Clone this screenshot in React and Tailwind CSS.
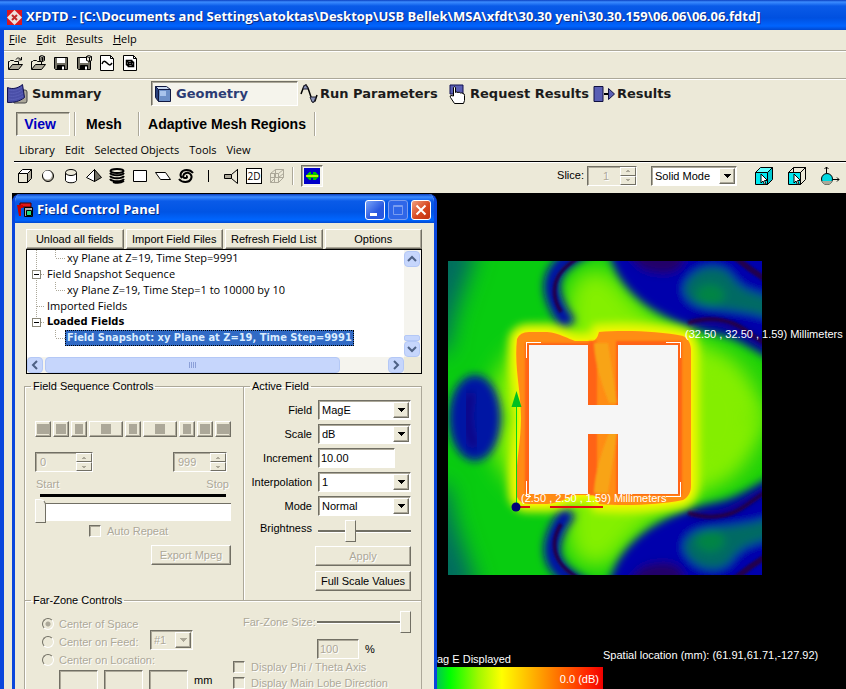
import React from 'react'
import clsx from 'clsx'

const raised = 'border border-t-white border-l-white border-r-[#716f64] border-b-[#716f64] shadow-[inset_-1px_-1px_0_#aca899]'
const sunken = 'border border-t-[#716f64] border-l-[#716f64] border-r-white border-b-white shadow-[inset_1px_1px_0_#aca899]'
const ghost = 'text-[#aca899] [text-shadow:1px_1px_0_#fff]'

/* ---------- small controls ---------- */

const Button = ({ children, className, disabled }) => (
  <button disabled={disabled} className={clsx('h-5 bg-[#ece9d8] text-center leading-4 whitespace-nowrap', raised, disabled && ghost, className)}>
    {children}
  </button>
)

const Select = ({ id, value, disabled, className, label }) => (
  <div className={clsx('flex h-5 items-stretch p-px', sunken, disabled ? 'bg-[#ece9d8]' : 'bg-white', className)}>
    <select id={id} aria-label={label} disabled={disabled} defaultValue={value} className={clsx('min-w-0 flex-1 appearance-none bg-transparent pl-0.5 leading-4 opacity-100', disabled && ghost)}>
      <option>{value}</option>
    </select>
    <span className={clsx('flex w-4 items-center justify-center bg-[#ece9d8]', raised)}>
      <svg width="7" height="4" viewBox="0 0 7 4" shapeRendering="crispEdges">
        <path d="M0 0h7v1h-1v1h-1v1h-1v1h-1v-1h-1v-1h-1v-1h-1z" fill={disabled ? '#aca899' : '#000'} />
      </svg>
    </span>
  </div>
)

const Spinner = ({ value, label, className, inputClass }) => (
  <div className={clsx('flex h-5 items-stretch bg-[#ece9d8]', sunken, className)}>
    <input aria-label={label} disabled defaultValue={value} className={clsx('min-w-0 flex-1 bg-transparent pl-1 leading-4', ghost, inputClass)} />
    <div className="flex w-4 flex-col">
      {['M0 2h4v-1h-1v-1h-2v1h-1z', 'M0 0h4v1h-1v1h-2v-1h-1z'].map((d, i) => (
        <button key={d} disabled aria-label={i ? 'Decrease' : 'Increase'} className="flex flex-1 items-center justify-center border border-t-white border-l-white border-r-[#716f64] border-b-[#716f64]">
          <svg width="4" height="2" viewBox="0 0 4 2"><path d={d} fill="#aca899" /></svg>
        </button>
      ))}
    </div>
  </div>
)

const Check = ({ id, children }) => (
  <div className="flex h-4 items-center gap-1.5">
    <input id={id} type="checkbox" disabled className={clsx('size-3 shrink-0 appearance-none bg-[#ece9d8]', sunken)} />
    <label htmlFor={id} className={clsx('whitespace-nowrap', ghost)}>{children}</label>
  </div>
)

const Radio = ({ id, checked, children }) => (
  <div className="flex h-[18px] items-center gap-[5px]">
    <input
      id={id}
      type="radio"
      name="center"
      disabled
      defaultChecked={checked}
      className="size-3 shrink-0 appearance-none rounded-full border border-t-[#716f64] border-l-[#716f64] border-r-white border-b-white checked:bg-[radial-gradient(circle,#aca899_2px,transparent_3px)]"
    />
    <label htmlFor={id} className={clsx('whitespace-nowrap', ghost)}>{children}</label>
  </div>
)

const Range = ({ id, value, disabled, className }) => (
  <input
    id={id}
    type="range"
    disabled={disabled}
    defaultValue={value}
    className={clsx(
      'h-[22px] appearance-none bg-[linear-gradient(to_bottom,transparent_10px,#716f64_10px,#716f64_12px,white_12px,white_13px,transparent_13px)]',
      '[&::-webkit-slider-thumb]:h-[22px] [&::-webkit-slider-thumb]:w-[11px] [&::-webkit-slider-thumb]:appearance-none [&::-webkit-slider-thumb]:border [&::-webkit-slider-thumb]:border-t-white [&::-webkit-slider-thumb]:border-l-white [&::-webkit-slider-thumb]:border-r-[#716f64] [&::-webkit-slider-thumb]:border-b-[#716f64] [&::-webkit-slider-thumb]:bg-[#ece9d8]',
      className
    )}
  />
)

/* ---------- icons ---------- */

const Icon = ({ w = 16, h = 16, children, className }) => (
  <svg width={w} height={h} viewBox={`0 0 ${w} ${h}`} fill="none" stroke="#000" className={clsx('shrink-0', className)}>
    {children}
  </svg>
)

const OpenIcon = ({ badge }) => (
  <Icon>
    <path d="M1.500 14V6.500h1l1-1h3l1 1h4v3" fill="#ece9d8" />
    <path d="M1.500 14.500l4-5h10l-4 5z" fill="#aca899" />
    {badge ? (
      <path d="M9.500 1.500l2-1 3 1v4l-2 1-3-1zM9.500 1.500l3 1v4M12.500 2.500l2-1M9.500 4h5" />
    ) : (
      <path d="M9 4.500c1-2 3-2 5 0M14.500 2v3h-3" />
    )}
  </Icon>
)

const SaveIcon = ({ badge }) => (
  <Icon>
    <path d="M1.500 2.500h13v12h-12l-1-1z" fill="#716f64" />
    <path d="M4 3h8v5h-8z" fill="#fff" stroke="none" />
    <path d="M4.500 10.500h7v4h-7z" fill="#000" />
    <path d="M9 11.500h2v3h-2z" fill="#fff" stroke="none" />
    {badge && <path d="M10.500 1.500l2-1 3 1v4l-2 1-3-1zM10.500 1.500l3 1v4M13.500 2.500l2-1" fill="#ece9d8" />}
  </Icon>
)

const PageIcon = ({ cube }) => (
  <Icon>
    <path d="M1.500.5h10l3 3v12h-13z" fill="#fff" />
    <path d="M11.500.5v3h3" />
    {cube ? (
      <path d="M4.500 5.500h5v4h-5zM6.500 7.500h5v4h-5zM4.500 5.500l2 2M9.500 5.500l2 2M4.500 9.500l2 2M9.500 9.500l2 2" strokeWidth="1.500" />
    ) : (
      <path d="M3 9c1.500-4 3-3 5-1s3 3 5 0" strokeWidth="1.500" />
    )}
  </Icon>
)

const shapes = [
  <Icon key="box"><path d="M1.500 5.500h9v9h-9z" fill="#ece9d8" /><path d="M1.500 5.500l4-4h9l-4 4z" fill="#fff" /><path d="M14.500 1.500v9l-4 4v-9z" fill="#aca899" /></Icon>,
  <Icon key="sphere"><circle cx="8" cy="8" r="5.500" fill="#aca899" /><circle cx="7.500" cy="7" r="4.500" fill="#fff" stroke="none" /></Icon>,
  <Icon key="cylinder"><path d="M2.500 4.500v8c1 3 10 3 11 0v-8" fill="#fff" /><ellipse cx="8" cy="4.500" rx="5.500" ry="3" fill="#ece9d8" /></Icon>,
  <Icon key="pyramid"><path d="M8.500 1.500l-8 8 8 4z" fill="#fff" /><path d="M8.500 1.500l7 8-7 4z" fill="#716f64" /></Icon>,
  <Icon key="coil"><g strokeWidth="2"><ellipse cx="8" cy="3" rx="6.500" ry="2" /><path d="M1 5c2 3 12 3 14 0M1 8c2 3 12 3 14 0M1 11c2 3 12 3 14 0M4 14c3 1 8 1 11-1" /></g></Icon>,
  <Icon key="rect"><path d="M1.500 2.500h13v11h-13z" fill="#fff" /></Icon>,
  <Icon key="skew"><path d="M.5 4.500h10l5 7h-10z" fill="#fff" /></Icon>,
  <Icon key="spiral"><path d="M1 11c3 4 10 4 12 0s-2-7-5-6-4 5-1 5 2-2 1-2M15 5c-3-4-10-4-12 0-1 2 0 4 1 5" strokeWidth="2" /></Icon>,
]

const HornIcon = () => (
  <Icon><path d="M1.500 6.500h7v4h-7z" fill="#aca899" /><path d="M8.500 6.500l6-5v14l-6-5M14.500 1v14" /></Icon>
)

const MeshIcon = () => (
  <Icon>
    <path d="M1.500 5.500l5-4h8v8l-5 5h-8zM1.500 5.500h8v9M9.500 5.500l5-4M5.500 5.500v9M1.500 9.500h8l5-4M6.500 1.500v8l-5 5M6.500 9.500h8" stroke="#aca899" />
  </Icon>
)

const FieldIcon = () => (
  <svg width="16" height="16" viewBox="0 0 16 16" shapeRendering="crispEdges">
    <path d="M0 0h16v16H0z" fill="#0000c8" />
    <path d="M1 8l4-4h2v2h2V4h2l4 4-4 4H9v-2H7v2H5z" fill="#00c000" />
    <path d="M2 7h12v2H2z" fill="#c0f000" />
  </svg>
)

const SelectCube = ({ solid }) => (
  <Icon w={20} h={20}>
    <path d="M1.500 6.500h12v12h-12z" fill="#00e8f0" />
    <path d="M1.500 6.500l5-5h12l-5 5z" fill={solid ? '#60ffff' : 'none'} />
    <path d="M18.500 1.500v12l-5 5v-12z" fill={solid ? '#00c8d0' : 'none'} />
    {!solid && <path d="M6.500 1.500v5" />}
    <path d="M7 8v9l2-2 1.500 3.500 1.500-.5-1.500-3.500h3z" fill="#fff" />
  </Icon>
)

const AxisBall = () => (
  <Icon w={20} h={20}>
    <circle cx="7" cy="13" r="5.500" fill="#00d8e0" />
    <path d="M2 15c1 5 9 5 10 0z" fill="#aca899" stroke="none" />
    <path d="M6.500 7V1M4.500 3l2-2 2 2M13 13.500h6M17 11.500l2 2-2 2" />
  </Icon>
)

const SummaryIcon = () => (
  <Icon w={22} h={20}>
    <path d="M8 6h11q2 0 2 2v9q0 2-2 2h-11z" fill="#aca899" stroke="#444" />
    <path d="M1.500 3.500c5 2 10 1 15-3l2 13c-5 4-10 5-17 5z" fill="#4a4fa8" stroke="#101050" />
    <path d="M3 6c5 1 9 0 13-3M3 9c5 1 9 0 13-3M3 12c5 1 9 0 14-3M3 15c5 1 9 0 14-3" stroke="#5a60b8" />
  </Icon>
)

const GeometryIcon = () => (
  <Icon w={18} h={18}>
    <path d="M1.500 1.500l3 3v12l-3-4z" fill="#28407c" stroke="#101840" />
    <path d="M1.500 1.500h11l4 3h-12z" fill="#c8d8f0" stroke="#101840" />
    <path d="M4.500 4.500h12v12h-12z" fill="#6c90c8" stroke="#101840" />
    <path d="M6 6h6v5h-6z" fill="#a8c4ec" stroke="none" />
  </Icon>
)

const WaveIcon = () => (
  <Icon w={18} h={20}>
    <path d="M1 10l3-8 2-1 2 3 4 12 1 2 2-1 2-6" strokeWidth="1.500" />
    <path d="M3 5l1-3 2-1 2 4zM10 13h6l-2 5h-2z" fill="#8a94b8" stroke="#223" />
  </Icon>
)

const HandIcon = () => (
  <Icon w={18} h={20}>
    <path d="M2 1h13v9h-13z" fill="#5a5fb4" stroke="#101050" />
    <path d="M5.500 12V3.500q1-1.500 2 0v5q1-1 2.500 0 1-1 2.500.5 1.500-.5 2.500.5v0q1.500 0 1.500 2v5l-1 3h-9l-4-6q-1-2 .5-2z" fill="#fff" />
  </Icon>
)

const ResultsIcon = () => (
  <Icon w={22} h={18}>
    <path d="M1 1.500h9v15h-9z" fill="#5a5fb4" stroke="#101040" />
    <path d="M11 9h5" strokeWidth="2" />
    <path d="M15.500 3.500l6 5.500-6 5.500z" fill="#5a5fb4" stroke="#101040" />
  </Icon>
)

const Separator = () => <span className="w-0.5 border-l border-l-[#aca899] border-r border-r-white" />

/* ---------- application bars ---------- */

const TitleBar = () => (
  <header className="flex h-[30px] shrink-0 items-center gap-1 bg-[linear-gradient(to_bottom,#0a3fc0_0px,#3c8cff_2px,#0a5be8_6px,#0050e0_18px,#0064ff_26px,#0048d0_30px)] pt-1 pl-[7px]">
    <svg width="15" height="15" viewBox="0 0 15 15">
      <path d="M0 0h15v15H0z" fill="#d81820" />
      <path d="M7.500 0l7.500 7.500-7.500 7.500L0 7.500z" fill="#f0e0dc" />
      <path d="M5 5l5 5M10 5l-5 5" stroke="#c02828" strokeWidth="2" />
    </svg>
    <h1 className="font-['Open_Sans',sans-serif] text-[13px] font-bold whitespace-nowrap text-white [text-shadow:1px_1px_0_#0a2a80]">
      {'XFDTD - [C:\\Documents and Settings\\atoktas\\Desktop\\USB Bellek\\MSA\\xfdt\\30.30 yeni\\30.30.159\\06.06\\06.06.fdtd]'}
    </h1>
  </header>
)

const MainMenu = () => (
  <nav className="flex h-[21px] items-center gap-2.5 border-b border-[#aca899] pb-0.5 pl-[5px]">
    {['File', 'Edit', 'Results', 'Help'].map((name) => (
      <button key={name}><u>{name[0]}</u>{name.slice(1)}</button>
    ))}
  </nav>
)

const fileTools = [
  ['Open', <OpenIcon />],
  ['Open geometry', <OpenIcon badge />],
  ['Save', <SaveIcon />],
  ['Save geometry', <SaveIcon badge />],
  ['Run file', <PageIcon />],
  ['Geometry file', <PageIcon cube />],
]

const FileTools = () => (
  <div className="flex h-7 items-center gap-[7px] border-t border-b border-t-white border-b-[#aca899] pb-1 pl-[3px]">
    {fileTools.map(([name, icon]) => <button key={name} aria-label={name}>{icon}</button>)}
  </div>
)

const MainTabs = () => (
  <nav className="flex h-7 items-center border-t border-white pl-0.5 font-['DejaVu_Sans',sans-serif] text-[13px] font-bold text-[#1c1c1c]">
    <button className="flex w-[145px] items-center gap-1"><SummaryIcon />Summary</button>
    <button className={clsx('flex h-[25px] w-[147px] items-center gap-1 bg-[#f5f4ec] pl-0.5 text-[#2c3c74]', sunken)}><GeometryIcon />Geometry</button>
    <button className="flex w-[150px] items-center gap-0.5 pl-0.5 whitespace-nowrap"><WaveIcon />Run Parameters</button>
    <button className="flex w-[145px] items-center gap-1 whitespace-nowrap"><HandIcon />Request Results</button>
    <button className="flex items-center gap-0.5"><ResultsIcon />Results</button>
  </nav>
)

const ViewTabs = () => (
  <nav className="flex h-[33px] items-center gap-1 pl-3 font-['Liberation_Sans',sans-serif] text-sm font-bold text-black">
    <button className={clsx('h-6 w-[54px] pr-1.5 leading-5 text-[#0000c0]', sunken)}>View</button>
    <span className="flex h-6"><Separator /></span>
    <button className="w-[54px] pr-1.5">Mesh</button>
    <span className="flex h-6"><Separator /></span>
    <button className="w-[166px] whitespace-nowrap">Adaptive Mesh Regions</button>
    <span className="flex h-6"><Separator /></span>
  </nav>
)

const GeometryMenu = () => (
  <nav className="flex h-[22px] items-center gap-2.5 border-b border-black pl-[5px]">
    {['Library', 'Edit', 'Selected Objects', 'Tools', 'View'].map((name) => <button key={name}>{name}</button>)}
  </nav>
)

const GeometryTools = () => (
  <div className="flex h-[31px] items-center border-t border-white pb-[5px] pl-[3px]">
    <div className="flex items-center gap-[7px]">
      {shapes.map((icon) => <button key={icon.key} aria-label={icon.key}>{icon}</button>)}
      <span className="mx-[7px] h-3 w-px bg-black" />
      <button aria-label="horn"><HornIcon /></button>
      <button className="size-4 border border-black bg-white text-[10px] leading-3">2D</button>
      <button aria-label="mesh" disabled><MeshIcon /></button>
      <span className="flex h-[18px]"><Separator /></span>
      <button aria-label="fields" className={clsx('flex size-[22px] items-center justify-center bg-[#f5f4ec]', sunken)}><FieldIcon /></button>
    </div>
    <div className="ml-auto flex items-center pr-1.5 font-['Liberation_Sans',sans-serif]">
      <span className="mr-[3px]">Slice:</span>
      <Spinner label="Slice" value="1" className="w-[50px]" inputClass="text-center" />
      <Select label="Draw mode" value="Solid Mode" className="mr-[17px] ml-3.5 w-[86px]" />
      <div className="flex gap-[13px]">
        <button aria-label="Select solid"><SelectCube solid /></button>
        <button aria-label="Select face"><SelectCube /></button>
        <button aria-label="Rotate"><AxisBall /></button>
      </div>
    </div>
  </div>
)

/* ---------- field control panel ---------- */

const treeRows = [
  { text: 'xy Plane at Z=19, Time Step=9991', child: true },
  { text: 'Field Snapshot Sequence', box: true },
  { text: 'xy Plane Z=19, Time Step=1 to 10000 by 10', child: true },
  { text: 'Imported Fields' },
  { text: 'Loaded Fields', box: true, bold: true, last: true },
  { text: 'Field Snapshot: xy Plane at Z=19, Time Step=9991', child: true, bold: true, selected: true, end: true },
]

const TreeRow = ({ row }) => (
  <li className="flex h-4 items-center">
    <svg width={row.child ? 38 : 18} height="16" className="shrink-0" fill="none" stroke="#aca899" strokeDasharray="1 1" shapeRendering="crispEdges">
      {!row.end && <path d={row.last ? 'M9.500 0v8' : 'M9.500 0v16'} />}
      <path d={row.child ? 'M28.500 0v8h9' : 'M9.500 8.500h9'} />
      {row.box && <path d="M5.500 4.500h8v8h-8z" fill="#fff" stroke="#8a8778" strokeDasharray="none" />}
      {row.box && <path d="M7 8.500h5" stroke="#000" strokeDasharray="none" />}
    </svg>
    <span
      className={clsx(
        'leading-4 whitespace-nowrap',
        row.bold && "font-['DejaVu_Sans_Condensed','DejaVu_Sans',sans-serif] font-bold",
        row.selected ? 'border border-dotted border-black bg-[#316ac5] px-px leading-[14px] text-[#d8ecff]' : 'px-0.5'
      )}
    >
      {row.text}
    </span>
  </li>
)

const ScrollButton = ({ d, label }) => (
  <button aria-label={label} className="flex size-4 shrink-0 items-center justify-center rounded-sm border border-[#b4c8f6] bg-[#c6d6fc]">
    <svg width="10" height="10" viewBox="0 0 10 10" fill="none" stroke="#4d6185" strokeWidth="2"><path d={d} /></svg>
  </button>
)

const FieldTree = () => (
  <div className="flex h-[125px] flex-col border border-black bg-white font-['Open_Sans',sans-serif]">
    <div className="flex h-[107px] justify-between">
      <ul>{treeRows.map((row) => <TreeRow key={row.text} row={row} />)}</ul>
      <div className="flex w-[17px] flex-col bg-[#f5f4ee] pt-px">
        <ScrollButton label="Scroll up" d="M1 7l4-4 4 4" />
        <span className="mt-auto h-1.5 w-4 rounded-xs border border-[#b4c8f6] bg-[#c6d6fc]" />
        <ScrollButton label="Scroll down" d="M1 3l4 4 4-4" />
      </div>
    </div>
    <div className="flex flex-1">
      <div className="flex flex-1 bg-[#f5f4ee]">
        <ScrollButton label="Scroll left" d="M7 1L3 5l4 4" />
        <span className="ml-0.5 flex h-4 w-[295px] items-center justify-center gap-px rounded-sm border border-[#b4c8f6] bg-[#c6d6fc]">
          {[0, 1, 2, 3].map((n) => <i key={n} className="h-1.5 w-px bg-[#8ca0d8]" />)}
        </span>
        <span className="flex-1" />
        <ScrollButton label="Scroll right" d="M3 1l4 4-4 4" />
      </div>
      <span className="w-[17px] bg-[#ece9d8]" />
    </div>
  </div>
)

const groupBox = 'min-w-0 border border-[#aca899] shadow-[inset_1px_1px_0_#fff]'

const players = [
  ['w-4', 'w-3'], ['w-4', 'w-2.5'], ['w-4', 'w-2'], ['w-[34px]', 'w-2.5'], ['w-4', 'w-2'],
  ['w-[34px]', 'w-2.5'], ['w-4', 'w-2'], ['w-4', 'w-2.5'], ['w-4', 'w-3'],
]

const SequenceControls = () => (
  <fieldset className={clsx('h-[221px] w-[219px] shrink-0 border-r-0 border-b-0 pr-3 pl-2.5', groupBox)}>
    <legend className="-ml-1 h-[14px] px-0.5 leading-[14px]">Field Sequence Controls</legend>
    <div className="mt-7 flex justify-between">
      {players.map(([w, dot], i) => (
        <button key={i} disabled aria-label={`Sequence ${i + 1}`} className={clsx('flex h-4 items-center justify-center', raised, w)}>
          <i className={clsx('h-2.5 bg-[#aca899]', dot)} />
        </button>
      ))}
    </div>
    <div className="mt-[15px] flex justify-between pr-1">
      <Spinner label="Start frame" value="0" className="w-[58px]" />
      <Spinner label="Stop frame" value="999" className="w-[54px]" />
    </div>
    <div className={clsx('mt-1 flex h-4 items-center justify-between pr-0.5 pl-px', ghost)}>
      <span>Start</span>
      <span>Stop</span>
    </div>
    <div className="mx-[5px] mt-0.5 h-[3px] bg-black" />
    <input
      type="range"
      aria-label="Sequence position"
      disabled
      defaultValue="0"
      className="mt-0.5 block h-6 w-full appearance-none bg-[linear-gradient(to_bottom,transparent_4px,#716f64_4px,#716f64_5px,white_5px,white_22px,transparent_22px)] [&::-webkit-slider-thumb]:h-6 [&::-webkit-slider-thumb]:w-[11px] [&::-webkit-slider-thumb]:appearance-none [&::-webkit-slider-thumb]:rounded-tr-md [&::-webkit-slider-thumb]:border [&::-webkit-slider-thumb]:border-white [&::-webkit-slider-thumb]:border-r-[#716f64] [&::-webkit-slider-thumb]:border-b-[#716f64] [&::-webkit-slider-thumb]:bg-[#f0eee2]"
    />
    <div className="flex h-4 items-center pl-[54px]"><Check id="repeat">Auto Repeat</Check></div>
    <div className="mt-1.5 flex justify-end"><Button disabled className="w-20">Export Mpeg</Button></div>
  </fieldset>
)

const ActiveField = () => (
  <fieldset className={clsx('h-[221px] flex-1 border-b-0 pr-2.5', groupBox)}>
    <legend className="ml-1.5 h-[14px] px-0.5 leading-[14px]">Active Field</legend>
    <div className="mt-[7px] grid grid-cols-[68px_1fr] items-center gap-x-1.5 gap-y-1">
      <label htmlFor="field" className="text-right">Field</label>
      <Select id="field" value="MagE" />
      <label htmlFor="scale" className="text-right">Scale</label>
      <Select id="scale" value="dB" />
      <label htmlFor="increment" className="text-right">Increment</label>
      <input id="increment" defaultValue="10.00" className={clsx('h-5 w-[77px] bg-white pl-0.5', sunken)} />
      <label htmlFor="interpolation" className="text-right">Interpolation</label>
      <Select id="interpolation" value="1" />
      <label htmlFor="mode" className="text-right">Mode</label>
      <Select id="mode" value="Normal" />
      <label htmlFor="brightness" className="self-start text-right">Brightness</label>
      <Range id="brightness" value="33" className="w-full" />
    </div>
    <div className="mt-1 ml-[71px] flex flex-col gap-[5px]">
      <Button disabled>Apply</Button>
      <Button>Full Scale Values</Button>
    </div>
  </fieldset>
)

const FarZone = () => (
  <fieldset className={clsx('flex pl-[17px]', groupBox)}>
    <legend className="-ml-[11px] h-[14px] px-0.5 leading-[14px]">Far-Zone Controls</legend>
    <div className="flex">
      <div className="w-[191px] pt-2">
        <div className="flex">
          <div className="w-[108px]">
            <Radio id="space" checked>Center of Space</Radio>
            <Radio id="feed">Center on Feed:</Radio>
            <Radio id="location">Center on Location:</Radio>
          </div>
          <Select label="Feed number" value="#1" disabled className="mt-[15px] w-[43px]" />
        </div>
        <div className="mt-px flex items-center gap-1.5 pl-[17px]">
          {['X', 'Y', 'Z'].map((axis) => (
            <input key={axis} aria-label={axis} disabled className={clsx('h-5 w-[39px] bg-[#ece9d8]', sunken)} />
          ))}
          <span>mm</span>
        </div>
      </div>
      <div>
        <div className="flex items-center gap-1 pt-1 pl-2.5">
          <label htmlFor="zone" className={clsx('w-[70px] whitespace-nowrap', ghost)}>Far-Zone Size:</label>
          <Range id="zone" value="100" disabled className="w-[94px]" />
        </div>
        <div className="mt-1.5 flex items-center gap-1.5 pl-[84px]">
          <input id="percent" aria-label="Zone size percent" disabled defaultValue="100" className={clsx('h-5 w-[42px] bg-[#ece9d8] pl-0.5', sunken, ghost)} />
          <label htmlFor="percent">%</label>
        </div>
        <div className="flex flex-col"><Check id="axis">Display Phi / Theta Axis</Check><Check id="lobe">Display Main Lobe Direction</Check></div>
      </div>
    </div>
  </fieldset>
)

const captionButton = 'flex size-5 items-center justify-center rounded-[3px] border border-white'

const FieldPanel = () => (
  <section className="mt-px flex w-[425px] shrink-0 flex-col overflow-hidden rounded-t-lg border-r-[3px] border-l-[3px] border-[#0a46dc] bg-[#ece9d8]">
    <header className="flex h-[29px] shrink-0 items-center bg-[linear-gradient(to_bottom,#0a3fc0_0px,#3c8cff_3px,#0a5be8_7px,#0054e4_18px,#0066ff_26px,#0048d0_29px)] pt-0.5 pl-0.5">
      <svg width="17" height="16" viewBox="0 0 17 16">
        <path d="M3 1h11v4h-11z" fill="#e01818" stroke="#400" />
        <path d="M7.500 5.500h8v9h-8z" fill="#aaa" stroke="#000" />
        <path d="M9.500 8.500h5v5h-5z" fill="#20e080" stroke="#000" />
        <path d="M0 3h6v3h-2v8h-2" fill="#c00" />
      </svg>
      <h2 className="ml-[3px] font-['Open_Sans',sans-serif] text-[13px] font-bold text-white [text-shadow:1px_1px_0_#0a2a80]">Field Control Panel</h2>
      <div className="mr-[3px] ml-auto flex gap-[3px]">
        <button aria-label="Minimize" className={clsx(captionButton, 'bg-[linear-gradient(135deg,#7aa4f8,#2858e0_60%)]')}>
          <svg width="12" height="12"><path d="M1 9h7v3H1z" fill="#fff" /></svg>
        </button>
        <button aria-label="Maximize" disabled className="flex size-5 items-center justify-center rounded-[3px] border border-[#7a9cf0] bg-[#2f66e8]">
          <svg width="12" height="12"><path d="M1.500 1.500h9v9h-9zM1 2.500h10" fill="none" stroke="#7a9cf0" /></svg>
        </button>
        <button aria-label="Close" className={clsx(captionButton, 'bg-[linear-gradient(135deg,#f0a080,#d84820_55%,#c03010)]')}>
          <svg width="12" height="12"><path d="M1.500 1.500l9 9M10.500 1.500l-9 9" stroke="#fff" strokeWidth="2" /></svg>
        </button>
      </div>
    </header>
    <div className="pt-1.5 pr-3 pl-[9px] text-black">
      <div className="flex gap-0.5 pl-0.5">
        {['Unload all fields', 'Import Field Files', 'Refresh Field List', 'Options'].map((name) => (
          <Button key={name} className="flex-1">{name}</Button>
        ))}
      </div>
      <div className="pl-0.5"><FieldTree /></div>
      <div className="mt-[5px] flex">
        <SequenceControls />
        <ActiveField />
      </div>
      <div className="mt-[-7px]"><FarZone /></div>
    </div>
  </section>
)

/* ---------- field plot ---------- */

// The field is symmetric about the horizontal centre line, so only one half is described.
const HalfField = () => (
  <g>
    <g filter="url(#soft)">
      <path d="M-20-20h50c-8 40-24 60-30 110h-20z" fill="#006a60" />
      <path d="M40 160C40 110 66 70 122 78c-4-20-6-46 4-62 14-12 34-12 44 2 20 30 56 50 92 66 30 14 40 40 60 76z" fill="#84f000" />
      <path d="M330 90v40h-14c0-24-16-40-56-52z" fill="#20d400" />
    </g>
    <g filter="url(#mid)">
      <path d="M160-12c6 26 20 44 44 60 20 12 40 20 66 25 18 4 30 12 60 30V-12z" fill="#0606ac" />
      <path d="M140-14c-28 14-40 28-35 48 3 12 8 20 16 30" fill="none" stroke="#0010a8" strokeWidth="16" />
      <path d="M236 26c8-22 38-26 48-10 12 16 22 14 40 22v20c-14-6-34-8-50-10-16-2-38-2-38-22z" fill="#006a64" />
      <path d="M248 32c4-10 18-12 26-4s-2 16-10 16-16-2-16-12z" fill="#008444" />
      <path d="M180-8h56c2 14-8 22-26 20s-22-8-30-20z" fill="#200068" />
      <path d="M240 64c20-8 40-2 50 4l30 18" fill="none" stroke="#100080" strokeWidth="8" />
    </g>
    <g filter="url(#fine)" fill="none" stroke="#20004e" strokeWidth="4">
      <path d="M132-4c-18 10-28 22-25 40 1 6 3 10 6 15" />
      <path d="M240 62c16-5 30-5 44 0s20 14 36 22" />
      <path d="M284-6c12 10 20 16 36 26" strokeWidth="6" />
    </g>
  </g>
)

const outline = 'M69 78q3-7 12-7h18c12 1 22 7 28 9h18q4-1 6-9c24-2 60-1 84 4 6 3 8 9 8 14v98H73v-30c0-28-7-50-4-79z'

const HalfHot = () => (
  <g>
    <path d={outline} fill="#f8f000" stroke="#e8f800" strokeWidth="16" filter="url(#mid)" />
    <path d={outline} fill="#ffe000" stroke="#ffee00" strokeWidth="2" filter="url(#fine)" />
    <path d={outline} fill="#ff8c14" />
    <g filter="url(#fine)">
      <path d="M77 82h64v-2h8v110h-72zM168 80h66v110h-66z" fill="#ff6414" />
      <path d="M146 82h14l9 60h-8c-8-20-14-40-15-60z" fill="#f8a418" />
    </g>
  </g>
)

const FieldPlot = () => (
  <svg width="400" height="314" viewBox="0 0 400 314" className="shrink-0" fontFamily="'Liberation Sans', sans-serif" fontSize="11">
    <defs>
      <filter id="soft" x="-30%" y="-30%" width="160%" height="160%"><feGaussianBlur stdDeviation="11" /></filter>
      <filter id="mid" x="-20%" y="-20%" width="140%" height="140%"><feGaussianBlur stdDeviation="4" /></filter>
      <filter id="fine" x="-20%" y="-20%" width="140%" height="140%"><feGaussianBlur stdDeviation="1.200" /></filter>
      <clipPath id="frame"><path d="M0 0h314v314H0z" /></clipPath>
      <clipPath id="upper"><path d="M0 0h314v157H0z" /></clipPath>
    </defs>
    <g clipPath="url(#frame)">
      <path d="M0 0h314v314H0z" fill="#08cc10" />
      <HalfField />
      <g transform="matrix(1 0 0 -1 0 314)"><HalfField /></g>
      <ellipse cx="268" cy="157" rx="36" ry="52" fill="#84ee00" filter="url(#soft)" />
      <ellipse cx="27" cy="157" rx="26" ry="43" fill="#0014a4" filter="url(#mid)" />
      <path d="M23 132c-6 20-4 38 4 54" fill="none" stroke="#180080" strokeWidth="8" filter="url(#mid)" />
      <g clipPath="url(#upper)"><HalfHot /></g>
      <g transform="matrix(1 0 0 -1 0 314)"><g clipPath="url(#upper)"><HalfHot /></g></g>
      <path d="M81 84h59v60h30v-60h60v149h-60v-60h-30v60h-59z" fill="#f6f6f6" />
    </g>
    <g fill="none" stroke="#fff" shapeRendering="crispEdges">
      <path d="M78.500 97v-15.500h14M218 81.500h14.500v15M78.500 220v15h4M218 235.500h14.500v-15" />
    </g>
    <path d="M68.500 146v99" stroke="#00d818" />
    <path d="M68.500 130l5 16h-10z" fill="#00c020" />
    <path d="M69 246h13M102 246h53" stroke="#e01010" strokeWidth="2" />
    <circle cx="68" cy="246" r="4.500" fill="#000078" />
    <g fill="#fff">
      <text x="237" y="77">(32.50 , 32.50 , 1.59) Millimeters</text>
      <text x="73" y="241">(2.50 , 2.50 , 1.59) Millimeters</text>
    </g>
  </svg>
)

const Scene = () => (
  <main className="flex min-w-0 flex-1 flex-col overflow-hidden bg-black font-['Liberation_Sans',sans-serif] text-white">
    <div className="pt-[68px] pl-[11px]"><FieldPlot /></div>
    <div className="mt-auto flex items-start">
      <div className="w-[166px]">
        <p className="h-[15px] leading-[14px]">ag E Displayed</p>
        <div className="h-[22px] bg-[linear-gradient(to_right,#00c850,#00ff00_8%,#a0f800_25%,#ffff00_39%,#ffa000_62%,#ff2000_92%,#f00000)] pr-1 text-right leading-6">0.0 (dB)</div>
      </div>
      <p className="-mt-1 leading-[14px]">Spatial location (mm): (61.91,61.71,-127.92)</p>
    </div>
  </main>
)

const App = () => (
  <div className="flex h-screen flex-col overflow-hidden bg-[#ece9d8] font-['Open_Sans',sans-serif] text-[11px] text-black">
    <TitleBar />
    <div className="flex min-h-0 flex-1 flex-col border-l-4 border-[#0a46dc]">
      <MainMenu />
      <FileTools />
      <MainTabs />
      <ViewTabs />
      <div className="pl-2.5">
        <GeometryMenu />
        <GeometryTools />
      </div>
      <div className="flex min-h-0 flex-1 border-l-8 border-[#ece9d8] bg-black font-['Liberation_Sans',sans-serif]">
        <FieldPanel />
        <Scene />
      </div>
    </div>
  </div>
)

export default App
